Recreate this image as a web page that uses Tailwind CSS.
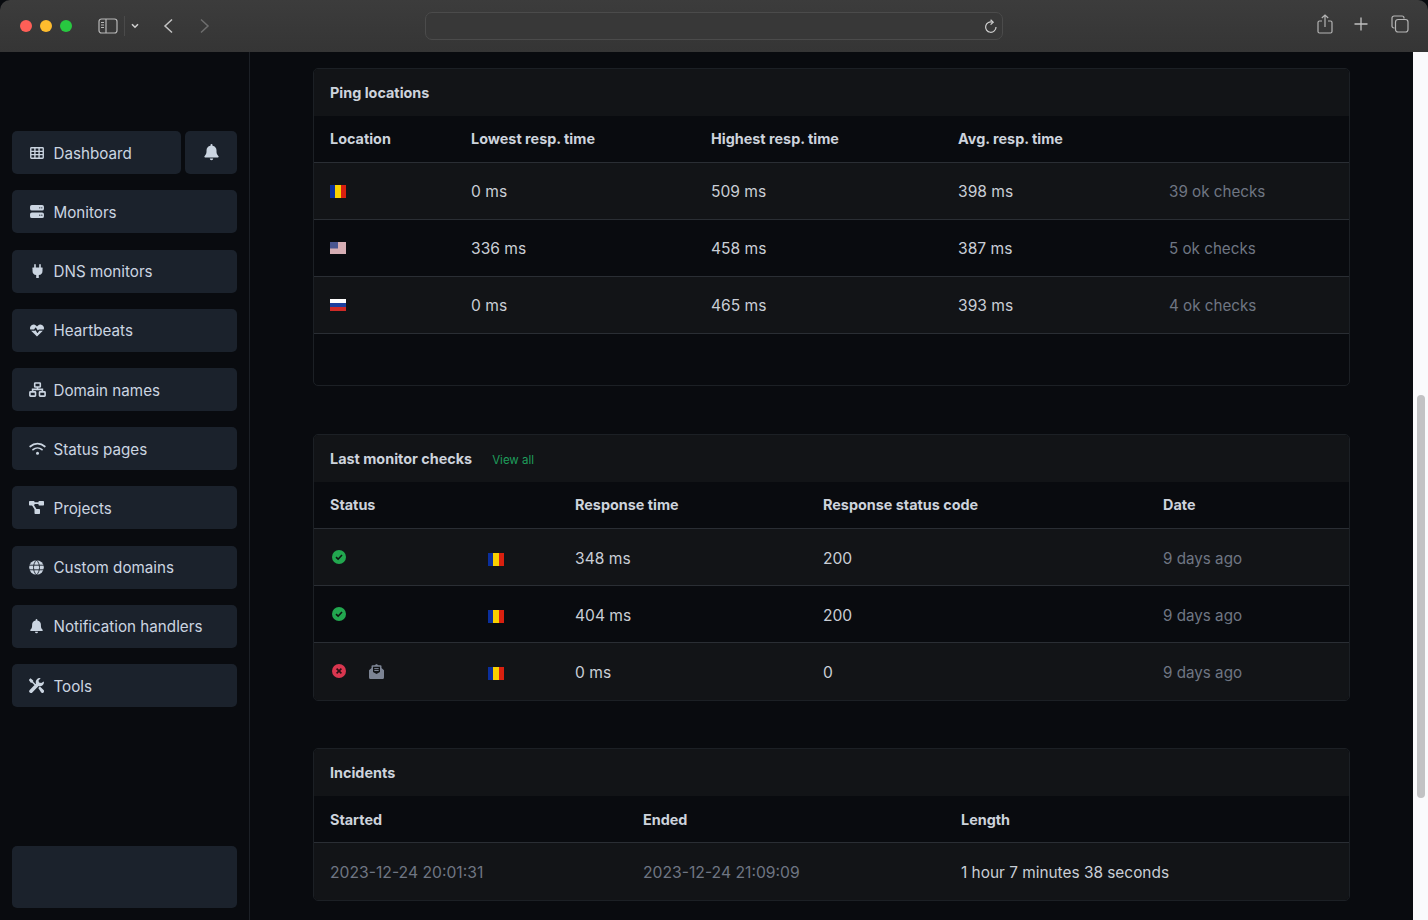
<!DOCTYPE html>
<html lang="en">
<head>
  <meta charset="UTF-8" />
  <title>Monitor</title>
  <script src="https://cdn.jsdelivr.net/npm/@tailwindcss/browser@4"></script>
</head>
<body class="bg-[#090b0f] font-['Inter',sans-serif] h-[920px] w-[1428px] overflow-hidden">

  <!-- browser toolbar -->
  <div class="h-[52px] bg-gradient-to-b from-[#3c3c3c] to-[#353535] rounded-t-[10px] flex items-center relative text-[#b8b8b8]">
    <div class="flex gap-[8px] ml-[20px]">
      <span class="w-[12px] h-[12px] rounded-full bg-[#ff5f57]"></span>
      <span class="w-[12px] h-[12px] rounded-full bg-[#febc2e]"></span>
      <span class="w-[12px] h-[12px] rounded-full bg-[#28c840]"></span>
    </div>
    <svg class="ml-[26px]" width="20" height="16" viewBox="0 0 20 16" fill="none" stroke="currentColor" stroke-width="1.2"><rect x="1" y="1" width="18" height="14" rx="2.5"/><path d="M8 1v14"/><path d="M3 4.5h3M3 7h3M3 9.5h3" stroke-width="1"/></svg>
    <span class="w-px h-[20px] bg-[#4a4a4a] ml-[6px]"></span>
    <svg class="ml-[6px]" width="8" height="6" viewBox="0 0 8 6" fill="none" stroke="#d0d0d0" stroke-width="1.6"><path d="M1 1.2l3 3 3-3"/></svg>
    <svg class="ml-[24px]" width="11" height="16" viewBox="0 0 11 16" fill="none" stroke="#c4c4c4" stroke-width="1.5"><path d="M9 1.5L2 8l7 6.5"/></svg>
    <svg class="ml-[25px]" width="11" height="16" viewBox="0 0 11 16" fill="none" stroke="#6e6e6e" stroke-width="1.5"><path d="M2 1.5L9 8l-7 6.5"/></svg>
    <div class="absolute left-[425px] top-[12px] w-[578px] h-[28px] rounded-[7px] border border-[#4b4b4b] bg-[#383838] flex items-center justify-end pr-[4px]">
      <svg width="14" height="15" viewBox="0 0 14 15" fill="none" stroke="#cfcfcf" stroke-width="1.2"><path d="M8.6 3.2A5.2 5.2 0 1 0 12 8"/><path d="M6.6 0.8l2.6 2.4-2.6 2.4"/></svg>
    </div>
    <div class="absolute right-[19px] top-[14px] flex items-center">
      <svg width="16" height="20" viewBox="0 0 16 20" fill="none" stroke="#b5b5b5" stroke-width="1.2"><path d="M5 7H2.5A1.5 1.5 0 0 0 1 8.500v9A1.500 1.500 0 0 0 2.500 19h11a1.500 1.500 0 0 0 1.500-1.500v-9A1.500 1.500 0 0 0 13.500 7H11"/><path d="M8 13V1M4.800 4L8 1l3.200 3"/></svg>
      <svg class="ml-[21px]" width="14" height="14" viewBox="0 0 14 14" fill="none" stroke="#c0c0c0" stroke-width="1.300"><path d="M7 0.500v13M0.500 7h13"/></svg>
      <svg class="ml-[23px]" width="18" height="18" viewBox="0 0 18 18" fill="none" stroke="#b5b5b5" stroke-width="1.200"><path d="M3.500 13H3a2 2 0 0 1-2-2V3a2 2 0 0 1 2-2h8a2 2 0 0 1 2 2v.5"/><rect x="4.500" y="4.500" width="12.500" height="12.500" rx="2.500"/></svg>
    </div>
  </div>

  <div class="flex h-[868px]">
    <!-- sidebar -->
    <aside class="w-[250px] shrink-0 border-r border-[#1c2026] pt-[79px] px-[12px] relative text-[15.2px] leading-[24px] text-[#cbd5e1] [&_a]:pt-[2px] [&_svg]:-mt-[2px]">
      <div class="flex gap-[4px]">
        <a class="h-[43px] w-[169px] rounded-[5px] bg-[#1b222c] flex items-center pl-[18px] gap-[9.500px]">
          <svg class="w-[14px] h-[12px]" viewBox="0 0 15 13" fill="#cbd5e1"><path fill-rule="evenodd" d="M1.500 0h12A1.500 1.500 0 0 1 15 1.500v10a1.500 1.500 0 0 1-1.500 1.500h-12A1.500 1.500 0 0 1 0 11.500v-10A1.500 1.500 0 0 1 1.500 0zM1.500 1.500V4h3V1.500zM6 1.500V4h3V1.500zM10.500 1.500V4h3V1.500zM1.500 5.300v2.400h3V5.300zM6 5.300v2.400h3V5.300zM10.500 5.300v2.400h3V5.300zM1.500 9v2.500h3V9zM6 9v2.500h3V9zM10.500 9v2.500h3V9z"/></svg>
          Dashboard
        </a>
        <a class="h-[43px] w-[52px] rounded-[5px] bg-[#1b222c] flex items-center justify-center">
          <svg width="15" height="17" viewBox="0 0 15 17" fill="#cbd5e1"><path d="M7.500 0a1 1 0 0 1 1 1v.7A5 5 0 0 1 12.500 6.600v1.200c0 1.500.6 2.900 1.600 4l.4.400a.8.800 0 0 1-.6 1.300H1.100a.8.800 0 0 1-.6-1.300l.4-.4c1-1.100 1.600-2.500 1.600-4V6.600A5 5 0 0 1 6.500 1.700V1a1 1 0 0 1 1-1z"/><path d="M5.800 14.500h3.400a1.700 1.700 0 0 1-3.400 0z"/></svg>
        </a>
      </div>

      <a class="mt-[16.400px] h-[43px] rounded-[5px] bg-[#1b222c] flex items-center pl-[18px] gap-[9.500px]">
        <svg class="w-[14px] h-[13px]" viewBox="0 0 15 14" fill="#cbd5e1"><path fill-rule="evenodd" d="M2 0h11a2 2 0 0 1 2 2v2a2 2 0 0 1-2 2H2a2 2 0 0 1-2-2V2a2 2 0 0 1 2-2zm8.500 2.300a.7.700 0 1 0 0 1.400.7.700 0 0 0 0-1.400zm2.200 0a.7.700 0 1 0 0 1.400.7.700 0 0 0 0-1.400zM2 8h11a2 2 0 0 1 2 2v2a2 2 0 0 1-2 2H2a2 2 0 0 1-2-2v-2a2 2 0 0 1 2-2zm8.500 2.300a.7.700 0 1 0 0 1.400.7.700 0 0 0 0-1.400zm2.200 0a.7.700 0 1 0 0 1.400.7.700 0 0 0 0-1.400z"/></svg>
        Monitors
      </a>
      <a class="mt-[16.200px] h-[43px] rounded-[5px] bg-[#1b222c] flex items-center pl-[19.500px] gap-[11px]">
        <svg class="w-[11px] h-[14px]" viewBox="0 0 11 14" fill="#cbd5e1"><path d="M3 0a.8.800 0 0 1 .8.800V3.500h3.400V.8a.8.800 0 0 1 1.600 0V3.500h1.400a.8.800 0 0 1 0 1.500H10.500v2a4.200 4.200 0 0 1-3.700 4.100V14H4.200v-2.900A4.200 4.200 0 0 1 .5 7V5H.8a.8.800 0 0 1 0-1.500h1.400V.8A.8.800 0 0 1 3 0z"/></svg>
        DNS monitors
      </a>
      <a class="mt-[16.200px] h-[43px] rounded-[5px] bg-[#1b222c] flex items-center pl-[18px] gap-[9.500px]">
        <svg class="w-[14px] h-[13px]" viewBox="0 0 15 13" fill="#cbd5e1"><path d="M7.500 2.200L6.400 1.100A3.900 3.900 0 0 0 .3 5.500H4.400l1.200-1.900a.5.500 0 0 1 .9 0l1.900 3 .8-1a.5.500 0 0 1 .4-.100h5.100A3.900 3.900 0 0 0 8.600 1.100z"/><path d="M1.200 6.800L7.500 13l6.300-6.200H9.900L8.400 8.800a.5.500 0 0 1-.8 0L6 6.200 5 6.800z"/></svg>
        Heartbeats
      </a>
      <a class="mt-[16.600px] h-[43px] rounded-[5px] bg-[#1b222c] flex items-center pl-[16.500px] gap-[8px]">
        <svg class="w-[17px] h-[15px]" viewBox="0 0 17 15" fill="none" stroke="#cbd5e1" stroke-width="1.600"><rect x="5.700" y="1" width="5.600" height="4" rx=".6"/><rect x=".9" y="9.900" width="5.600" height="4.200" rx=".6"/><rect x="10.500" y="9.900" width="5.600" height="4.200" rx=".6"/><path d="M8.500 5v2.400M3.600 9.900V7.400h9.800v2.500"/></svg>
        Domain names
      </a>
      <a class="mt-[15.800px] h-[43px] rounded-[5px] bg-[#1b222c] flex items-center pl-[16.500px] gap-[8px]">
        <svg class="w-[17px] h-[13px]" viewBox="0 0 17 13" fill="none" stroke="#cbd5e1" stroke-width="1.700" stroke-linecap="round"><path d="M1.200 4.500a10.800 10.800 0 0 1 14.600 0"/><path d="M4 7.700a6.800 6.800 0 0 1 9 0"/><circle cx="8.500" cy="11.200" r="1.500" fill="#cbd5e1" stroke="none"/></svg>
        Status pages
      </a>
      <a class="mt-[16.200px] h-[43px] rounded-[5px] bg-[#1b222c] flex items-center pl-[17px] gap-[9.500px]">
        <svg class="w-[15px] h-[13px]" viewBox="0 0 15 13" fill="#cbd5e1"><rect x="0" y="0" width="5.500" height="4.500" rx=".7"/><rect x="9.500" y="0" width="5.500" height="4.500" rx=".7"/><rect x="5.500" y="8" width="5.500" height="5" rx=".7"/><path d="M5 1.200h5v1.800H5zM2.800 4h2l3 4.500H5.600z"/></svg>
        Projects
      </a>
      <a class="mt-[16.200px] h-[43px] rounded-[5px] bg-[#1b222c] flex items-center pl-[17px] gap-[9.500px]">
        <svg class="w-[15px] h-[15px]" viewBox="0 0 15 15" fill="none" stroke="#cbd5e1"><circle cx="7.500" cy="7.500" r="7.300" fill="#cbd5e1" stroke="none"/><path d="M0 5.200h15M0 9.800h15M7.500 0c-4 4-4 11 0 15M7.500 0c4 4 4 11 0 15" stroke="#1b222c" stroke-width=".9"/></svg>
        Custom domains
      </a>
      <a class="mt-[16.200px] h-[43px] rounded-[5px] bg-[#1b222c] flex items-center pl-[17px] gap-[9.500px]">
        <svg class="w-[15px] h-[15px]" viewBox="0 0 15 17" fill="#cbd5e1"><path d="M7.500 0a1 1 0 0 1 1 1v.7A5 5 0 0 1 12.500 6.600v1.200c0 1.500.6 2.900 1.600 4l.4.400a.8.800 0 0 1-.6 1.300H1.100a.8.800 0 0 1-.6-1.300l.4-.4c1-1.100 1.600-2.500 1.600-4V6.600A5 5 0 0 1 6.500 1.700V1a1 1 0 0 1 1-1z"/><path d="M5.800 14.500h3.400a1.700 1.700 0 0 1-3.400 0z"/></svg>
        Notification handlers
      </a>
      <a class="mt-[16.600px] h-[43px] rounded-[5px] bg-[#1b222c] flex items-center pl-[17px] gap-[9.500px]">
        <svg class="w-[15px] h-[15px]" viewBox="0 0 15 15" fill="#cbd5e1"><path d="M1.500 0.300L4.200 2.400v1.300l3 3-1.100 1.100-3-3H1.800L-.2 2zM14.800 3.400a4 4 0 0 1-5.200 4.700L3.300 14.400a1.700 1.700 0 0 1-2.600-2.500L7 5.500a4 4 0 0 1 4.700-5.300L9.500 2.400l.5 2.200 2.200.5zM9.300 10l1.600-1.600 3.700 3.700a1.700 1.700 0 0 1-2.400 2.400z"/></svg>
        Tools
      </a>

      <div class="absolute left-[12px] bottom-[12px] w-[225px] h-[62px] rounded-[5px] bg-[#1b222c]"></div>
    </aside>

    <!-- main content -->
    <main class="w-[1163px] shrink-0 pl-[63px] pr-[63px] pt-[16px] text-[15.600px] leading-[24px] text-[#c9ced6]">

      <section class="w-[1037px] h-[318px] rounded-[5px] border border-[#1c2025] overflow-hidden">
        <div class="h-[47px] bg-[#121417] pl-[16px] flex items-center text-[14.400px] font-bold text-[#cdd3dc]">Ping locations</div>
        <div class="h-[47px] flex items-center pl-[16px] text-[14.400px] font-bold text-[#cdd3dc] border-b border-[#2a2e34]">
          <span class="w-[141px]">Location</span><span class="w-[240px]">Lowest resp. time</span><span class="w-[247px]">Highest resp. time</span><span class="w-[211px]">Avg. resp. time</span>
        </div>
        <div class="h-[57px] flex items-center pl-[16px] pt-[2px] bg-[#121417] border-b border-[#2a2e34]">
          <span class="w-[141px] -mt-[2px]"><span class="flex w-[16px] h-[13px]"><i class="flex-1 bg-[#0b2f9c]"></i><i class="flex-1 bg-[#f8d000]"></i><i class="flex-1 bg-[#d9200f]"></i></span></span>
          <span class="w-[240px]">0 ms</span><span class="w-[247px]">509 ms</span><span class="w-[211px]">398 ms</span><span class="text-[#6f7683] text-[15.200px]">39 ok checks</span>
        </div>
        <div class="h-[57px] flex items-center pl-[16px] pt-[2px] border-b border-[#2a2e34]">
          <span class="w-[141px] -mt-[2px]">
            <svg width="16" height="12" viewBox="0 0 16 12"><rect width="16" height="12" fill="#e8e0e2"/><path d="M0 1h16M0 3h16M0 5h16M0 7h16M0 9h16M0 11h16" stroke="#c0707c" stroke-width=".9"/><rect width="8" height="6.500" fill="#4a5690"/></svg>
          </span>
          <span class="w-[240px]">336 ms</span><span class="w-[247px]">458 ms</span><span class="w-[211px]">387 ms</span><span class="text-[#6f7683] text-[15.200px]">5 ok checks</span>
        </div>
        <div class="h-[57px] flex items-center pl-[16px] pt-[2px] bg-[#121417] border-b border-[#2a2e34]">
          <span class="w-[141px] -mt-[2px]"><span class="flex flex-col w-[16px] h-[12px]"><i class="flex-1 bg-white"></i><i class="flex-1 bg-[#1c3f9e]"></i><i class="flex-1 bg-[#cf2a27]"></i></span></span>
          <span class="w-[240px]">0 ms</span><span class="w-[247px]">465 ms</span><span class="w-[211px]">393 ms</span><span class="text-[#6f7683] text-[15.200px]">4 ok checks</span>
        </div>
      </section>

      <section class="mt-[48px] w-[1037px] h-[267px] rounded-[5px] border border-[#1c2025] overflow-hidden">
        <div class="h-[47px] bg-[#121417] pl-[16px] flex items-center gap-[20px] text-[14.400px] font-bold text-[#cdd3dc]">Last monitor checks <a class="text-[11.500px] font-normal text-[#1f9d5c] mt-[2px]">View all</a></div>
        <div class="h-[47px] flex items-center pl-[16px] text-[14.400px] font-bold text-[#cdd3dc] border-b border-[#2a2e34]">
          <span class="w-[245px]">Status</span><span class="w-[248px]">Response time</span><span class="w-[340px]">Response status code</span><span>Date</span>
        </div>
        <div class="h-[57px] flex items-center pl-[16px] pt-[4px] bg-[#121417] border-b border-[#2a2e34]">
          <span class="w-[158px] flex -mt-[5px]">
            <svg class="ml-[1px]" width="16" height="16" viewBox="0 0 16 16"><circle cx="8" cy="8" r="7" fill="#22a74f"/><path d="M5 8.200l2.100 2L11 6" fill="none" stroke="#0d1512" stroke-width="1.600"/></svg>
          </span>
          <span class="w-[87px]"><span class="flex w-[16px] h-[13px]"><i class="flex-1 bg-[#0b2f9c]"></i><i class="flex-1 bg-[#f8d000]"></i><i class="flex-1 bg-[#d9200f]"></i></span></span>
          <span class="w-[248px]">348 ms</span><span class="w-[340px]">200</span><span class="text-[#6f7683] text-[15.200px]">9 days ago</span>
        </div>
        <div class="h-[57px] flex items-center pl-[16px] pt-[4px] border-b border-[#2a2e34]">
          <span class="w-[158px] flex -mt-[5px]">
            <svg class="ml-[1px]" width="16" height="16" viewBox="0 0 16 16"><circle cx="8" cy="8" r="7" fill="#22a74f"/><path d="M5 8.200l2.100 2L11 6" fill="none" stroke="#0d1512" stroke-width="1.600"/></svg>
          </span>
          <span class="w-[87px]"><span class="flex w-[16px] h-[13px]"><i class="flex-1 bg-[#0b2f9c]"></i><i class="flex-1 bg-[#f8d000]"></i><i class="flex-1 bg-[#d9200f]"></i></span></span>
          <span class="w-[248px]">404 ms</span><span class="w-[340px]">200</span><span class="text-[#6f7683] text-[15.200px]">9 days ago</span>
        </div>
        <div class="h-[57px] flex items-center pl-[16px] pt-[2px] bg-[#121417]">
          <span class="w-[158px] flex items-center -mt-[3px]">
            <svg class="ml-[1px]" width="16" height="16" viewBox="0 0 16 16"><circle cx="8" cy="8" r="7" fill="#d9364f"/><path d="M5.600 5.600l4.800 4.800M10.400 5.600l-4.800 4.800" fill="none" stroke="#2a0f14" stroke-width="1.600"/></svg>
            <svg class="ml-[22px]" width="15" height="15" viewBox="0 0 15 15"><path d="M0 6.200L2.500 4V2.200A1 1 0 0 1 3.500 1.200H5.500L7.500 0l2 1.200h2a1 1 0 0 1 1 1V4L15 6.200V13.500A1.500 1.500 0 0 1 13.500 15h-12A1.500 1.500 0 0 1 0 13.500z" fill="#7c8494"/><path d="M4 2.800h7V8L7.500 10 4 8z" fill="#121417"/><path d="M5.300 4.600h4.400M5.300 6.500h4.400" stroke="#7c8494"/></svg>
          </span>
          <span class="w-[87px]"><span class="flex w-[16px] h-[13px] mt-[2px]"><i class="flex-1 bg-[#0b2f9c]"></i><i class="flex-1 bg-[#f8d000]"></i><i class="flex-1 bg-[#d9200f]"></i></span></span>
          <span class="w-[248px]">0 ms</span><span class="w-[340px]">0</span><span class="text-[#6f7683] text-[15.200px]">9 days ago</span>
        </div>
      </section>

      <section class="mt-[47px] w-[1037px] h-[153px] rounded-[5px] border border-[#1c2025] overflow-hidden">
        <div class="h-[47px] bg-[#121417] pl-[16px] flex items-center text-[14.400px] font-bold text-[#cdd3dc]">Incidents</div>
        <div class="h-[47px] flex items-center pl-[16px] pt-[2px] text-[14.400px] font-bold text-[#cdd3dc] border-b border-[#2a2e34]">
          <span class="w-[313px]">Started</span><span class="w-[318px]">Ended</span><span>Length</span>
        </div>
        <div class="h-[57px] flex items-center pl-[16px] pt-[2px] bg-[#121417]">
          <span class="w-[313px] text-[#6f7683] text-[15.700px]">2023-12-24 20:01:31</span><span class="w-[318px] text-[#6f7683] text-[15.700px]">2023-12-24 21:09:09</span><span class="text-[15.400px]">1 hour 7 minutes 38 seconds</span>
        </div>
      </section>
    </main>

    <!-- scrollbar -->
    <div class="w-[15px] shrink-0 bg-[#fafafc] pl-[4px] pt-[343px]">
      <div class="w-[8px] h-[403px] rounded-full bg-[#c2c2c4]"></div>
    </div>
  </div>
</body>
</html>
